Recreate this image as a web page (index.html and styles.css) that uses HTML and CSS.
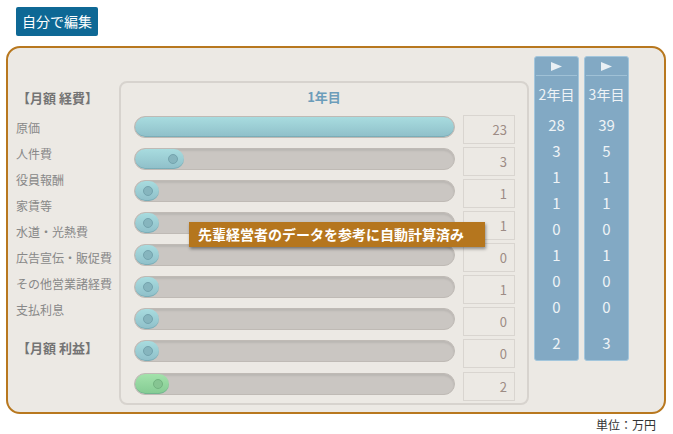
FILE: index.html
```html
<!DOCTYPE html>
<html lang="ja">
<head>
<meta charset="utf-8">
<link rel="stylesheet" href="styles.css">
</head>
<body>
<div class="top"><button class="edit-btn">自分で編集</button></div>
<div class="panel">
  <div class="labels">
    <div class="lbl-head">【月額 経費】</div>
    <ul class="lbl-list">
      <li>原価</li>
      <li>人件費</li>
      <li>役員報酬</li>
      <li>家賃等</li>
      <li>水道・光熱費</li>
      <li>広告宣伝・販促費</li>
      <li>その他営業諸経費</li>
      <li>支払利息</li>
    </ul>
    <div class="lbl-head lbl-profit">【月額 利益】</div>
  </div>
  <div class="year1">
    <div class="year1-title">1年目</div>
    <div class="rows">
      <div class="row"><div class="track"><div class="fill" style="width:319px"></div></div><div class="val">23</div></div>
      <div class="row"><div class="track"><div class="fill" style="width:49px"><span class="knob"></span></div></div><div class="val">3</div></div>
      <div class="row"><div class="track"><div class="fill" style="width:24px"><span class="knob"></span></div></div><div class="val">1</div></div>
      <div class="row"><div class="track"><div class="fill" style="width:24px"><span class="knob"></span></div></div><div class="val">1</div></div>
      <div class="row"><div class="track"><div class="fill" style="width:24px"><span class="knob"></span></div></div><div class="val">0</div></div>
      <div class="row"><div class="track"><div class="fill" style="width:24px"><span class="knob"></span></div></div><div class="val">1</div></div>
      <div class="row"><div class="track"><div class="fill" style="width:24px"><span class="knob"></span></div></div><div class="val">0</div></div>
      <div class="row"><div class="track"><div class="fill" style="width:24px"><span class="knob"></span></div></div><div class="val">0</div></div>
      <div class="row row-profit"><div class="track"><div class="fill fill-green" style="width:34px"><span class="knob knob-green"></span></div></div><div class="val">2</div></div>
    </div>
    <div class="tip">先輩経営者のデータを参考に自動計算済み</div>
  </div>
  <div class="ycol">
    <div class="ycol-head"><svg width="11" height="9" viewBox="0 0 11 9"><polygon points="0,0 11,4.5 0,9" fill="#e9f0f5"/></svg></div>
    <div class="ycol-title">2年目</div>
    <ul class="ycol-list">
      <li>28</li><li>3</li><li>1</li><li>1</li><li>0</li><li>1</li><li>0</li><li>0</li>
    </ul>
    <div class="ycol-profit">2</div>
  </div>
  <div class="ycol">
    <div class="ycol-head"><svg width="11" height="9" viewBox="0 0 11 9"><polygon points="0,0 11,4.5 0,9" fill="#e9f0f5"/></svg></div>
    <div class="ycol-title">3年目</div>
    <ul class="ycol-list">
      <li>39</li><li>5</li><li>1</li><li>1</li><li>0</li><li>1</li><li>0</li><li>0</li>
    </ul>
    <div class="ycol-profit">3</div>
  </div>
</div>
<div class="unit">単位：万円</div>
</body>
</html>
```
FILE: styles.css
```css
* { box-sizing: border-box; }
body {
  margin: 0;
  background: #fff;
  font-family: "Noto Sans CJK JP", "Noto Sans", sans-serif;
}
ul { list-style: none; margin: 0; padding: 0; }

.top { padding: 7px 0 0 16px; height: 46px; }
.edit-btn {
  display: block;
  width: 82px;
  height: 29px;
  padding: 0;
  border: none;
  border-radius: 2px;
  background: #0e6895;
  color: #fff;
  font-family: inherit;
  font-size: 14px;
  line-height: 29px;
}

.panel {
  margin-left: 6px;
  width: 660px;
  height: 368px;
  border: 2px solid #b8781f;
  border-radius: 14px;
  background: #ece9e4;
  display: flex;
  align-items: flex-start;
  padding-left: 8px;
}

.labels {
  width: 103px;
  padding-top: 37px;
  color: #888;
  font-size: 12px;
}
.lbl-head {
  height: 26px;
  line-height: 26px;
  font-size: 13px;
  font-weight: bold;
  color: #747474;
  padding-left: 1px;
}
.lbl-list { margin-top: 4px; }
.lbl-list li { height: 26px; line-height: 26px; white-space: nowrap; }
.lbl-profit { margin-top: 12px; }

.year1 {
  position: relative;
  width: 410px;
  height: 324px;
  margin-top: 33px;
  border: 2px solid #d7d3ce;
  border-radius: 8px;
  overflow: hidden;
}
.year1-title {
  height: 28px;
  line-height: 28px;
  text-align: center;
  font-size: 13px;
  font-weight: bold;
  color: #6c9dba;
}
.rows { margin-top: 4px; padding: 0 12px 0 13px; }
.row {
  display: flex;
  align-items: flex-start;
  gap: 8px;
  height: 29px;
  margin-bottom: 3px;
}
.row-profit { margin-top: 4px; }
.track {
  width: 321px;
  height: 22px;
  margin-top: 1px;
  border: 1px solid #bfbab5;
  border-radius: 11px;
  background: #cac6c2;
  box-shadow: inset 0 2px 2px rgba(0,0,0,0.08);
  overflow: hidden;
}
.fill {
  height: 20px;
  border-radius: 10px;
  background: linear-gradient(#a8dcdf, #8fbfc9);
  box-shadow: inset 0 -1px 0 rgba(60,120,130,0.25);
  display: flex;
  align-items: center;
  justify-content: flex-end;
  padding-right: 6px;
}
.fill-green { background: linear-gradient(#a3e2ab, #84cb93); }
.knob {
  width: 10px;
  height: 10px;
  border-radius: 50%;
  background: #86b5be;
  border: 1px solid #74a3ad;
}
.knob-green { background: #86c592; border-color: #73b380; }
.val {
  width: 52px;
  height: 29px;
  border: 1px solid #d9d5d0;
  text-align: right;
  padding-right: 7px;
  line-height: 27px;
  font-size: 13px;
  color: #9d8c85;
}

.tip {
  position: absolute;
  left: 68px;
  top: 139px;
  width: 296px;
  height: 25px;
  line-height: 25px;
  padding-left: 9px;
  background: #b5761e;
  color: #fff;
  font-size: 14px;
  font-weight: bold;
  white-space: nowrap;
  box-shadow: 1px 2px 3px rgba(0,0,0,0.4);
}

.ycol {
  width: 45px;
  margin-top: 8px;
  margin-left: 5px;
  background: #82a9c4;
  border: 1px solid #a3c6dc;
  border-radius: 3px;
  color: #eef3f6;
  text-align: center;
  padding-bottom: 4px;
}
.ycol-head {
  height: 19px;
  margin: 0 1px;
  border-bottom: 1px solid #a0c1d6;
  display: flex;
  align-items: center;
  justify-content: center;
}
.ycol-title {
  height: 36px;
  line-height: 36px;
  font-size: 14px;
}
.ycol-list li, .ycol-profit {
  height: 26px;
  line-height: 26px;
  font-size: 15px;
}
.ycol-profit { margin-top: 10px; }

.unit {
  width: 660px;
  margin-left: 6px;
  margin-top: 3px;
  padding-right: 10px;
  text-align: right;
  font-size: 12px;
  line-height: 16px;
  color: #333;
}
```
